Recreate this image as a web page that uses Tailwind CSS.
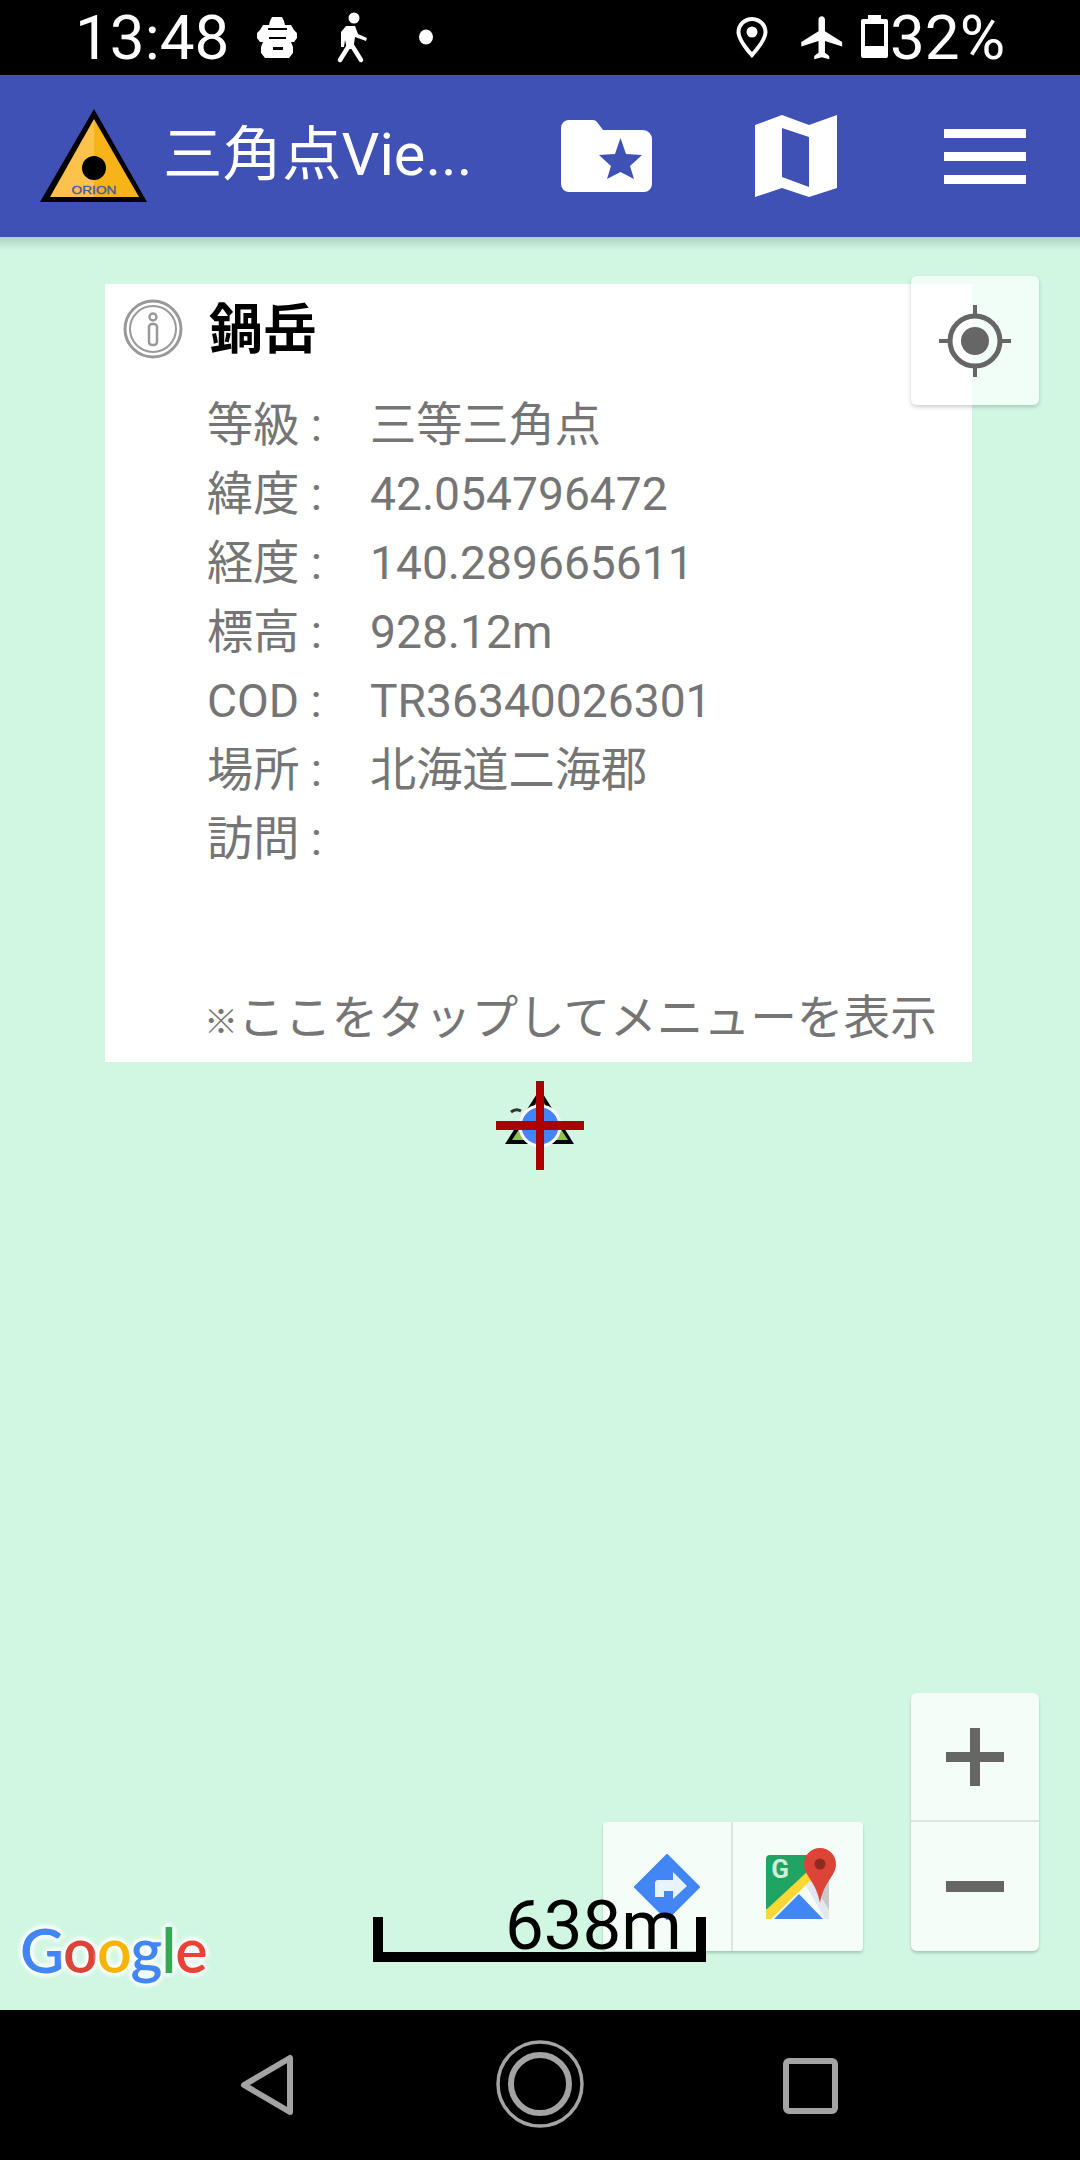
<!DOCTYPE html>
<html lang="ja">
<head>
<meta charset="utf-8">
<script src="https://cdn.jsdelivr.net/npm/@tailwindcss/browser@4"></script>
</head>
<body class="m-0">
<div class="flex flex-col w-[1080px] h-[2160px] overflow-hidden bg-[#d1f7e3] font-['Roboto','Noto_Sans_CJK_JP',sans-serif]">

  <!-- status bar -->
  <div class="relative h-[75px] shrink-0 bg-black text-white flex items-center pl-[75px] text-[62px] leading-none">
    <span>13:48</span>
    <svg class="absolute left-0 top-0" width="1080" height="75" viewBox="0 0 1080 75" fill="#fff">
      <path fill-rule="evenodd" d="M272 17h10l2 4 1 4h6l3 5 3 3v5l-3 4h-3l2 5v6l-4 5h-24l-4-5v-6l2-5h-3l-3-4v-5l3-3 3-5h6l1-4zM268 28v2h19v-2zM269 37v2h17v-2zM273 47v3h10v-3z"/>
      <circle cx="354" cy="18" r="5.500"/>
      <path d="M346 26h9l3 8 9 4-1 3-11-4-1 7-3 5-4 0-2-9-1 7h-3l0-15z"/>
      <path d="M350 44L340 60M351 44L361 60" stroke="#fff" stroke-width="4.500" stroke-linecap="round" fill="none"/>
      <ellipse cx="426" cy="37" rx="7" ry="7.500"/>
      <path fill-rule="evenodd" d="M752 17c-9 0-15.500 7-15.500 15 0 10 15.500 26 15.500 26s15.500-16 15.500-26c0-8-6.500-15-15.500-15zM752 21c6.500 0 11.500 5 11.500 11 0 6-7 15-11.500 20-4.500-5-11.500-14-11.500-20 0-6 5-11 11.500-11zM752 26.500a5.500 5.500 0 1 0 0 11 5.500 5.500 0 1 0 0-11z"/>
      <g transform="translate(797 12) scale(2.15)"><path d="M21 16v-2l-8-5V3.500c0-.83-.67-1.500-1.500-1.500S10 2.670 10 3.500V9l-8 5v2l8-2.500V19l-2 1.500V22l3.500-1 3.500 1v-1.500L13 19v-5.500l8 2.500z"/></g>
      <path fill-rule="evenodd" d="M868 15h13v4h5a2 2 0 0 1 2 2v35a2 2 0 0 1-2 2h-23a2 2 0 0 1-2-2V21a2 2 0 0 1 2-2h5zM865 24v22h19V24z"/>
    </svg>
    <span class="absolute left-[890px] top-[7px]">32%</span>
  </div>

  <!-- app bar -->
  <div class="h-[162px] shrink-0 bg-[#3f51b5] flex items-center text-white relative">
    <svg class="ml-[40px] shrink-0" width="107" height="94" viewBox="40 110 107 94">
      <path d="M94 110L147 203H40z" fill="#000"/>
      <path d="M94 120L50 198H94z" fill="#fcc24c"/>
      <path d="M94 120L139 198H94z" fill="#f8b318"/>
      <circle cx="94" cy="169" r="12" fill="#000"/>
      <text x="94" y="195" text-anchor="middle" font-family="Liberation Sans" font-size="10" textLength="45" lengthAdjust="spacingAndGlyphs" fill="#40609c" stroke="#40609c" stroke-width=".3">ORION</text>
    </svg>
    <span class="ml-[16px] text-[59.500px] leading-none w-[398px] shrink-0 whitespace-nowrap">三角点Vie...</span>
    <svg class="shrink-0" width="91" height="72" viewBox="0 0 91 72">
      <path d="M8 0h24a5 5 0 0 1 4 2l6 8h40a9 9 0 0 1 9 9v45a8 8 0 0 1-8 8H8a8 8 0 0 1-8-8V8a8 8 0 0 1 8-8z" fill="#fff"/>
      <path d="M59.500 18L65 34 81 35 69 46 73 59 59.500 52 46 59 50 46 38 35 54 34z" fill="#3f51b5"/>
    </svg>
    <svg class="ml-[103px] shrink-0" width="82" height="82" viewBox="0 0 82 82">
      <path fill="#fff" fill-rule="evenodd" d="M0 10L27 0 54 10 82 0V73L54 82 27 73 0 82zM27 13V62L54 72V22z"/>
    </svg>
    <div class="ml-[107px] w-[82px] flex flex-col gap-[14px] shrink-0">
      <div class="h-[9px] bg-white"></div>
      <div class="h-[9px] bg-white"></div>
      <div class="h-[9px] bg-white"></div>
    </div>
  </div>

  <!-- map -->
  <div class="relative flex-1">
    <div class="absolute inset-x-0 top-0 h-[14px] bg-linear-to-b from-black/15 to-transparent"></div>

    <!-- info card -->
    <div class="absolute left-[105px] top-[47px] w-[867px] h-[778px] bg-white text-[46.200px] leading-[69px] text-[#757575]">
      <div class="flex items-center h-[90px] pl-[18px]">
        <svg width="60" height="60" viewBox="0 0 60 60" fill="none" stroke="#999">
          <circle cx="30" cy="30" r="28" stroke-width="3"/>
          <circle cx="30" cy="30" r="23" stroke-width="2"/>
          <circle cx="30" cy="18" r="3.500" stroke-width="2.500"/>
          <rect x="26" y="25" width="8" height="21" rx="3" stroke-width="2.500"/>
        </svg>
        <span class="ml-[26px] mt-[4px] text-[54px] font-bold text-black leading-none">鍋岳</span>
      </div>
      <div class="mt-[17px] pl-[102px] grid grid-cols-[163px_1fr]">
        <span>等級 :</span><span>三等三角点</span>
        <span>緯度 :</span><span>42.054796472</span>
        <span>経度 :</span><span>140.289665611</span>
        <span>標高 :</span><span>928.12m</span>
        <span>COD :</span><span>TR36340026301</span>
        <span>場所 :</span><span>北海道二海郡</span>
        <span>訪問 :</span><span></span>
      </div>
      <p class="mt-[110px] pl-[99px] whitespace-nowrap text-[46.700px]"><span class="inline-block w-[34px] text-[34px]">※</span>ここをタップしてメニューを表示</p>
    </div>

    <!-- location button -->
    <div class="absolute left-[911px] top-[39px] w-[128px] h-[129px] rounded-[6px] bg-white/70 shadow-[0_2px_4px_rgba(0,0,0,0.2)] flex items-center justify-center">
      <svg width="76" height="76" viewBox="0 0 76 76" fill="none" stroke="#666">
        <circle cx="38" cy="38" r="25" stroke-width="5"/>
        <circle cx="38" cy="38" r="14" fill="#666" stroke="none"/>
        <path d="M38 2v11M38 63v11M2 38h11M63 38h11" stroke-width="4"/>
      </svg>
    </div>

    <!-- marker -->
    <svg class="absolute left-[490px] top-[839px]" width="100" height="100" viewBox="490 1076 100 100">
      <path d="M540 1089L574 1144H505z" fill="#000"/>
      <path d="M540 1097L568 1140H512z" fill="#8bc34a"/>
      <path d="M540 1097L552 1115H528z" fill="#d99a2b"/>
      <path d="M511 1112q5-4 10-1" stroke="#333" stroke-width="3" fill="none"/>
      <circle cx="540" cy="1126" r="20" fill="#4285f4" stroke="#fff" stroke-width="3"/>
      <rect x="536" y="1081" width="8" height="89" fill="#aa0000"/>
      <rect x="496" y="1121" width="88" height="9" fill="#aa0000"/>
    </svg>

    <!-- map toolbar -->
    <div class="absolute left-[603px] top-[1585px] w-[260px] h-[129px] rounded-[4px] bg-white/75 shadow-[0_2px_3px_rgba(0,0,0,0.2)] flex">
      <div class="w-[130px] border-r-[2px] border-[#dde5e1] flex items-center justify-center">
        <svg width="66" height="66" viewBox="0 0 66 66">
          <path d="M33 1L65 33 33 65 1 33z" fill="#4285f4" stroke="#4285f4" stroke-linejoin="round" stroke-width="2"/>
          <path d="M21 43V29a3 3 0 0 1 3-3h15v-8l14 14-14 13v-8H30v6z" fill="#e8f3fb"/>
        </svg>
      </div>
      <div class="flex-1 flex items-center justify-center">
        <svg width="86" height="86" viewBox="0 0 86 86">
          <path d="M15 11H58V31L11 66V15a4 4 0 0 1 4-4z" fill="#1fa463"/>
          <path d="M54 36H74V68z" fill="#c9c9c9"/>
          <path d="M19 75L44 50 68 75z" fill="#4285f4"/>
          <path d="M50 40L56 36 74 66V75H70z" fill="#e3e8f0"/>
          <path d="M11 66L52 28 56 36 16 75H11z" fill="#fdd835"/>
          <path d="M65 4c9 0 16 7 16 16 0 12-12 17-16 39-4-22-16-27-16-39 0-9 7-16 16-16z" fill="#db4437"/>
          <circle cx="65" cy="20" r="5.500" fill="#8e2a20"/>
          <text x="25" y="34" text-anchor="middle" font-family="Roboto" font-size="26" font-weight="700" fill="#cdeedd">G</text>
        </svg>
      </div>
    </div>

    <!-- zoom -->
    <div class="absolute left-[911px] top-[1456px] w-[128px] h-[258px] rounded-[6px] bg-white/75 shadow-[0_2px_3px_rgba(0,0,0,0.2)] flex flex-col">
      <div class="h-[129px] border-b-[2px] border-[#dde5e1] flex items-center justify-center">
        <svg width="58" height="58" viewBox="0 0 58 58" fill="#666"><rect x="24" width="10" height="58"/><rect y="24" width="58" height="10"/></svg>
      </div>
      <div class="flex-1 flex items-center justify-center">
        <div class="w-[58px] h-[11px] bg-[#666]"></div>
      </div>
    </div>

    <!-- Google -->
    <div class="absolute left-[20px] top-[1682px] text-[61px] leading-none font-['Lato',sans-serif] font-semibold tracking-[-1px] [text-shadow:4px_0_3px_rgba(255,255,255,0.6),-4px_0_3px_rgba(255,255,255,0.6),0_4px_3px_rgba(255,255,255,0.6),0_-4px_3px_rgba(255,255,255,0.6),0_0_6px_#fff]"><span class="text-[#4285f4]">G</span><span class="text-[#db4437]">o</span><span class="text-[#f4b400]">o</span><span class="text-[#4285f4]">g</span><span class="text-[#34a853]">l</span><span class="text-[#ea4335]">e</span></div>

    <!-- scale -->
    <div class="absolute left-[373px] top-[1680px] w-[333px] h-[45px] border-x-[10px] border-b-[10px] border-black"></div>
    <div class="absolute left-[505px] top-[1654px] text-[69px] leading-[69px] text-black">638m</div>
  </div>

  <!-- nav bar -->
  <div class="h-[150px] shrink-0 bg-black">
    <svg width="1080" height="150" viewBox="0 2010 1080 150" fill="none" stroke="#a3a3a3">
      <path d="M290 2058V2112L244 2085z" stroke-width="6" stroke-linejoin="round"/>
      <circle cx="540" cy="2084" r="42" stroke-width="3.500"/>
      <circle cx="540" cy="2084" r="29" stroke-width="6"/>
      <rect x="786" y="2061" width="49" height="50" rx="3" stroke-width="6"/>
    </svg>
  </div>
</div>
</body>
</html>
